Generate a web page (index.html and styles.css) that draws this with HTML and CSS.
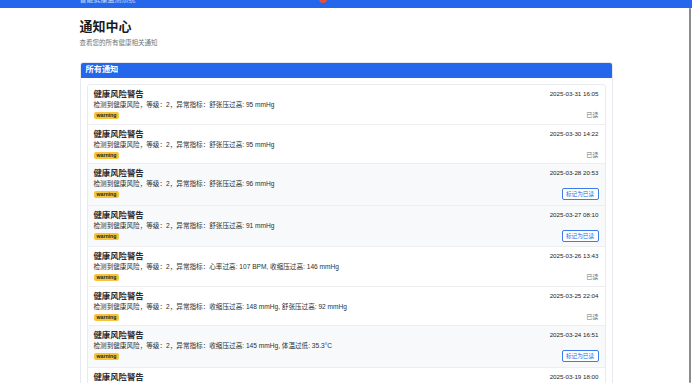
FILE: index.html
```html
<!DOCTYPE html>
<html lang="zh-CN">
<head>
    <meta charset="UTF-8">
    <meta name="viewport" content="width=device-width, initial-scale=1.0">
    <title>通知中心</title>
    <link rel="stylesheet" href="styles.css">
</head>
<body>
    <nav class="topbar">
        <div class="topbar-inner">
            <span class="brand">智能健康监测系统</span>
            <span class="avatar"></span>
        </div>
    </nav>

    <div class="container">
        <div class="page-head">
            <h1>通知中心</h1>
            <p class="subtitle">查看您的所有健康相关通知</p>
        </div>

        <div class="card">
            <div class="card-header">所有通知</div>
            <div class="card-body">
                <ul class="notice-list">
                    <li class="notice">
                        <div class="notice-main">
                            <h6>健康风险警告</h6>
                            <p>检测到健康风险，等级：2，异常指标：舒张压过高: 95 mmHg</p>
                            <span class="badge">warning</span>
                        </div>
                        <div class="notice-side">
                            <small class="date">2025-03-31 16:05</small>
                            <span class="read">已读</span>
                        </div>
                    </li>
                    <li class="notice">
                        <div class="notice-main">
                            <h6>健康风险警告</h6>
                            <p>检测到健康风险，等级：2，异常指标：舒张压过高: 95 mmHg</p>
                            <span class="badge">warning</span>
                        </div>
                        <div class="notice-side">
                            <small class="date">2025-03-30 14:22</small>
                            <span class="read">已读</span>
                        </div>
                    </li>
                    <li class="notice unread">
                        <div class="notice-main">
                            <h6>健康风险警告</h6>
                            <p>检测到健康风险，等级：2，异常指标：舒张压过高: 96 mmHg</p>
                            <span class="badge">warning</span>
                        </div>
                        <div class="notice-side">
                            <small class="date">2025-03-28 20:53</small>
                            <button type="button" class="mark-btn">标记为已读</button>
                        </div>
                    </li>
                    <li class="notice unread">
                        <div class="notice-main">
                            <h6>健康风险警告</h6>
                            <p>检测到健康风险，等级：2，异常指标：舒张压过高: 91 mmHg</p>
                            <span class="badge">warning</span>
                        </div>
                        <div class="notice-side">
                            <small class="date">2025-03-27 08:10</small>
                            <button type="button" class="mark-btn">标记为已读</button>
                        </div>
                    </li>
                    <li class="notice">
                        <div class="notice-main">
                            <h6>健康风险警告</h6>
                            <p>检测到健康风险，等级：2，异常指标：心率过高: 107 BPM, 收缩压过高: 146 mmHg</p>
                            <span class="badge">warning</span>
                        </div>
                        <div class="notice-side">
                            <small class="date">2025-03-26 13:43</small>
                            <span class="read">已读</span>
                        </div>
                    </li>
                    <li class="notice">
                        <div class="notice-main">
                            <h6>健康风险警告</h6>
                            <p>检测到健康风险，等级：2，异常指标：收缩压过高: 148 mmHg, 舒张压过高: 92 mmHg</p>
                            <span class="badge">warning</span>
                        </div>
                        <div class="notice-side">
                            <small class="date">2025-03-25 22:04</small>
                            <span class="read">已读</span>
                        </div>
                    </li>
                    <li class="notice unread">
                        <div class="notice-main">
                            <h6>健康风险警告</h6>
                            <p>检测到健康风险，等级：2，异常指标：收缩压过高: 145 mmHg, 体温过低: 35.3°C</p>
                            <span class="badge">warning</span>
                        </div>
                        <div class="notice-side">
                            <small class="date">2025-03-24 16:51</small>
                            <button type="button" class="mark-btn">标记为已读</button>
                        </div>
                    </li>
                    <li class="notice">
                        <div class="notice-main">
                            <h6>健康风险警告</h6>
                            <p>检测到健康风险，等级：2，异常指标：舒张压过高: 93 mmHg</p>
                            <span class="badge">warning</span>
                        </div>
                        <div class="notice-side">
                            <small class="date">2025-03-19 18:00</small>
                            <span class="read">已读</span>
                        </div>
                    </li>
                </ul>
            </div>
        </div>
    </div>

    <div class="scroll-thumb"></div>
</body>
</html>
```

FILE: styles.css
```css
body {
    margin: 0;
    background-color: #ffffff;
    color: #212529;
    font-family: "Liberation Sans", "Noto Sans CJK SC", sans-serif;
}

/* top navigation, scrolled mostly out of view */
.topbar {
    height: 8px;
    overflow: hidden;
    background-color: #2466ec;
}

.topbar-inner {
    width: 533px;
    height: 8px;
    margin: 0 auto;
    display: flex;
    align-items: flex-end;
}

.brand {
    color: #e8eefc;
    font-size: 7px;
    line-height: 8px;
    margin-bottom: 4px;
    opacity: 0.8;
}

.avatar {
    width: 8px;
    height: 8px;
    border-radius: 50%;
    background-color: #e0533a;
    margin-left: 183px;
    margin-bottom: 5px;
}

.container {
    width: 533px;
    margin: 0 auto;
}

.page-head {
    padding-top: 11px;
}

.page-head h1 {
    margin: 0;
    font-size: 13px;
    line-height: 16px;
    font-weight: 700;
    color: #1a1a1a;
}

.subtitle {
    margin: 3px 0 0;
    font-size: 6.5px;
    line-height: 9px;
    color: #6c757d;
}

.card {
    margin-top: 15px;
    border: 1px solid #e6e9ed;
    border-radius: 3px;
    overflow: hidden;
}

.card-header {
    height: 16px;
    line-height: 16px;
    padding: 0 6px;
    margin: -1px -1px 0;
    background-color: #2466ec;
    color: #ffffff;
    font-size: 8.2px;
    font-weight: 700;
}

.card-body {
    padding: 6px 6px 6px;
}

.notice-list {
    list-style: none;
    margin: 0;
    padding: 0;
    border: 1px solid #e9ecef;
    border-radius: 3px;
}

.notice {
    display: flex;
    justify-content: space-between;
    padding: 4px 6px 4.5px;
    border-top: 1px solid #eceef0;
}

.notice:first-child {
    border-top: none;
}

.notice.unread {
    background-color: #f8f9fa;
}

.notice-main h6 {
    margin: 0;
    font-size: 8.4px;
    line-height: 11px;
    font-weight: 700;
    color: #2a2d31;
}

.notice-main p {
    margin: 0;
    font-size: 6.6px;
    line-height: 10px;
    color: #2b2f33;
}

.badge {
    display: block;
    width: fit-content;
    margin-top: 2px;
    padding: 0 3px;
    height: 7px;
    line-height: 7px;
    border-radius: 2px;
    background-color: #f7c33a;
    color: #212529;
    font-size: 5.2px;
    font-weight: 700;
}

.notice-side {
    display: flex;
    flex-direction: column;
    justify-content: space-between;
    align-items: flex-end;
}

.date {
    margin-top: 1px;
    font-size: 6.2px;
    line-height: 8px;
    color: #212529;
}

.read {
    font-size: 6.2px;
    line-height: 8px;
    color: #6c757d;
}

.mark-btn {
    margin-top: 11px;
    height: 12px;
    padding: 0 3.5px;
    border: 1px solid #3b7cf0;
    border-radius: 2px;
    background-color: #ffffff;
    color: #2466ec;
    font-family: inherit;
    font-size: 5.6px;
    line-height: 10px;
}

.scroll-thumb {
    position: fixed;
    top: 8px;
    right: 1px;
    width: 2px;
    height: 375px;
    background-color: #8c8c8c;
    border-radius: 1px;
}
```
